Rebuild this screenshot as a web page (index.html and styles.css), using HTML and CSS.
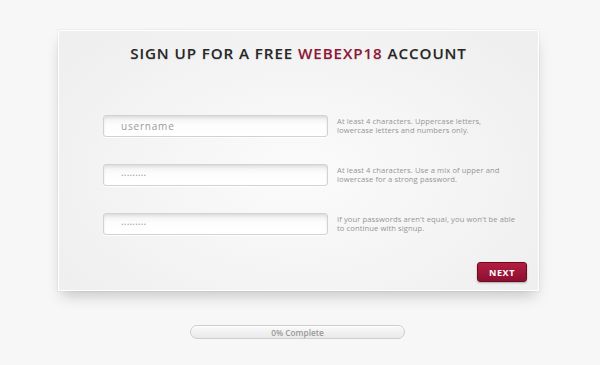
FILE: index.html
```html
<!DOCTYPE html>
<html>
<head>
<meta charset="utf-8">
<link rel="stylesheet" href="styles.css">
</head>
<body>
<div class="page">
  <div class="card">
    <h1 class="title">SIGN UP FOR A FREE <span class="brand">WEBEXP18</span> ACCOUNT</h1>
    <div class="fields">
      <div class="row">
        <div class="input"><span class="ph">username</span></div>
        <p class="hint">At least 4 characters. Uppercase letters,<br>lowercase letters and numbers only.</p>
      </div>
      <div class="row">
        <div class="input"><span class="ph dots">.........</span></div>
        <p class="hint">At least 4 characters. Use a mix of upper and<br>lowercase for a strong password.</p>
      </div>
      <div class="row">
        <div class="input"><span class="ph dots">.........</span></div>
        <p class="hint">If your passwords aren't equal, you won't be able<br>to continue with signup.</p>
      </div>
    </div>
    <div class="actions">
      <button class="next">NEXT</button>
    </div>
  </div>
  <div class="progress"><span>0% Complete</span></div>
</div>
</body>
</html>
```

FILE: styles.css
```css
html, body {
  margin: 0;
  padding: 0;
  background: #f7f7f7;
  font-family: "Open Sans", "DejaVu Sans", sans-serif;
}
.page {
  width: 600px;
  height: 365px;
  display: flex;
  flex-direction: column;
  align-items: flex-start;
  padding-top: 30px;
  box-sizing: border-box;
}
.card {
  margin-left: 58px;
  width: 481px;
  height: 261px;
  box-sizing: border-box;
  border: 1px solid #ffffff;
  background: radial-gradient(ellipse 60% 70% at 50% 55%, #fbfbfb 0%, #f4f4f4 60%, #efefef 100%);
  box-shadow: 0 8px 14px -4px rgba(0,0,0,0.22), 0 0 0 1px rgba(0,0,0,0.03);
  display: flex;
  flex-direction: column;
}
.title {
  margin: 11px 0 0;
  text-align: center;
  font-size: 15.2px;
  line-height: 22px;
  font-weight: 600;
  letter-spacing: 0.9px;
  color: #262626;
  text-shadow: 0 1px 1px rgba(0,0,0,0.12);
}
.brand {
  color: #8e1636;
}
.fields {
  margin-top: 51px;
  display: flex;
  flex-direction: column;
  gap: 27px;
}
.row {
  display: flex;
  align-items: center;
  padding-left: 44px;
  gap: 9px;
}
.input {
  width: 225px;
  height: 22px;
  box-sizing: border-box;
  border: 1px solid #d2d2d2;
  border-radius: 3px;
  background: linear-gradient(#f0f0f0, #fdfdfd 45%, #ffffff);
  box-shadow: inset 0 2px 3px rgba(0,0,0,0.08), 0 1px 0 #fff;
  display: flex;
  align-items: center;
  padding-left: 17px;
}
.ph {
  font-size: 10px;
  color: #9a9a9a;
  letter-spacing: 0.8px;
}
.ph.dots {
  letter-spacing: 0.2px;
  position: relative;
  top: -3px;
}
.hint {
  margin: 0;
  font-size: 7.6px;
  line-height: 9.5px;
  color: #959595;
  letter-spacing: 0.1px;
}
.actions {
  margin-top: auto;
  margin-bottom: 8px;
  display: flex;
  justify-content: flex-end;
  padding-right: 11px;
}
.next {
  width: 50px;
  height: 20px;
  border: 1px solid #6e0a20;
  border-radius: 3px;
  background: linear-gradient(#b31d42, #8c1030);
  color: #fff;
  font-family: "Open Sans", "DejaVu Sans", sans-serif;
  font-weight: 700;
  font-size: 9px;
  letter-spacing: 0.6px;
  padding: 0;
  box-shadow: 0 1px 2px rgba(0,0,0,0.3);
}
.progress {
  margin-top: 34px;
  margin-left: 190px;
  width: 215px;
  height: 14px;
  box-sizing: border-box;
  border: 1px solid #cdcdcd;
  border-radius: 8px;
  background: linear-gradient(#fafafa, #e9e9e9);
  box-shadow: inset 0 1px 0 #fff;
  display: flex;
  align-items: center;
  justify-content: center;
}
.progress span {
  font-size: 8.3px;
  color: #999;
  font-weight: 600;
}
```
